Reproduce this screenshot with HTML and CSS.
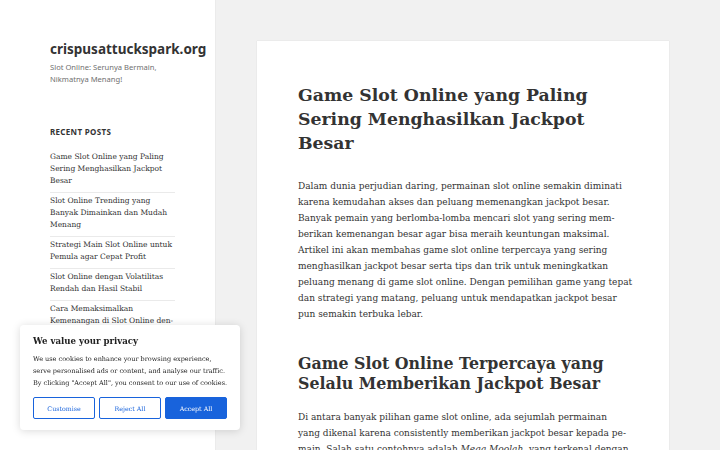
FILE: index.html
```html
<!DOCTYPE html>
<html lang="id">
<head>
    <meta charset="UTF-8">
    <meta name="viewport" content="width=device-width, initial-scale=1.0">
    <title>crispusattuckspark.org</title>
    <link rel="stylesheet" href="styles.css">
</head>
<body>
    <div class="site">
        <aside class="sidebar">
            <header class="site-header">
                <p class="site-title">crispusattuckspark.org</p>
                <p class="site-description">Slot Online: Serunya Bermain, Nikmatnya Menang!</p>
            </header>
            <section class="widget">
                <h2 class="widget-title">Recent Posts</h2>
                <ul class="recent-posts">
                    <li><a href="#">Game Slot Online yang Paling Sering Menghasilkan Jackpot Besar</a></li>
                    <li><a href="#">Slot Online Trending yang Banyak Dimainkan dan Mudah Menang</a></li>
                    <li><a href="#">Strategi Main Slot Online untuk Pemula agar Cepat Profit</a></li>
                    <li><a href="#">Slot Online dengan Volatilitas Rendah dan Hasil Stabil</a></li>
                    <li><a href="#">Cara Memaksimalkan Kemenangan di Slot Online den&shy;gan Modal Kecil</a></li>
                </ul>
            </section>
        </aside>

        <main class="content">
            <article class="post">
                <h1 class="entry-title">Game Slot Online yang Paling Sering Menghasilkan Jackpot Besar</h1>
                <div class="entry-content">
                    <p>Dalam dunia perjudian daring, permainan slot online semakin diminati karena kemudahan akses dan peluang memenangkan jackpot besar. Banyak pemain yang berlomba-lomba mencari slot yang sering mem&shy;berikan kemenangan besar agar bisa meraih keuntungan maksimal. Artikel ini akan membahas game slot online terpercaya yang sering menghasilkan jackpot besar serta tips dan trik untuk meningkatkan peluang menang di game slot online. Dengan pemilihan game yang tepat dan strategi yang matang, peluang untuk mendapatkan jackpot besar pun semakin terbuka lebar.</p>
                    <h2>Game Slot Online Terpercaya yang Selalu Memberikan Jackpot Besar</h2>
                    <p>Di antara banyak pilihan game slot online, ada sejumlah permainan<br>yang dikenal karena consistently memberikan jackpot besar kepada pe&shy;main. Salah satu contohnya adalah <em>Mega Moolah</em>, yang terkenal dengan jackpot progresifnya.</p>
                </div>
            </article>
        </main>
    </div>

    <div class="cookie-banner">
        <p class="cookie-title">We value your privacy</p>
        <p class="cookie-text">We use cookies to enhance your browsing experience,<br>serve personalised ads or content, and analyse our traffic.<br>By clicking "Accept All", you consent to our use of cookies.</p>
        <div class="cookie-buttons">
            <button class="btn btn-outline">Customise</button>
            <button class="btn btn-outline">Reject All</button>
            <button class="btn btn-accept">Accept All</button>
        </div>
    </div>
</body>
</html>
```

FILE: styles.css
```css
/* Reset */
* {
    margin: 0;
    padding: 0;
    box-sizing: border-box;
}

body {
    font-family: "DejaVu Serif", serif;
    background-color: #f1f1f1;
    color: #333;
    height: 450px;
    overflow: hidden;
}

a {
    color: #333;
    text-decoration: none;
}

.site {
    display: flex;
    align-items: flex-start;
    height: 100%;
}

/* Barra lateral */
.sidebar {
    width: 215px;
    height: 100%;
    background-color: #fff;
    box-shadow: 0 0 1px rgba(0, 0, 0, 0.15);
    padding: 39px 40px 0 50px;
    flex-shrink: 0;
}

.site-title {
    font-family: "Noto Sans", sans-serif;
    font-weight: 700;
    font-size: 13.5px;
    line-height: 20px;
    color: #333;
    white-space: nowrap;
}

.site-description {
    font-family: "Noto Sans", sans-serif;
    font-size: 7.6px;
    line-height: 12px;
    color: #707070;
    margin-top: 2px;
}

.widget {
    margin-top: 41px;
}

.widget-title {
    font-family: "Noto Sans", sans-serif;
    font-size: 8px;
    font-weight: 700;
    letter-spacing: 0.04em;
    text-transform: uppercase;
    line-height: 12px;
    margin-bottom: 13px;
}

.recent-posts {
    list-style: none;
    width: 125px;
}

.recent-posts li {
    font-size: 7.5px;
    line-height: 12px;
    border-top: 1px solid #eaeaea;
    padding: 2px 0 5px 0;
}

.recent-posts li:first-child {
    border-top: none;
    padding-top: 0;
}

/* Conteúdo */
.content {
    margin: 41px 0 0 42px;
    width: 412px;
}

.post {
    background-color: #fff;
    box-shadow: 0 0 1px rgba(0, 0, 0, 0.15);
    padding: 42px 36px 40px 41px;
}

.entry-title {
    font-size: 17.3px;
    line-height: 24px;
    font-weight: 700;
    margin-bottom: 23px;
    padding-right: 5px;
}

.entry-content p {
    font-size: 9px;
    line-height: 16px;
    margin-bottom: 32px;
}

.entry-content h2 {
    font-size: 15.8px;
    line-height: 20px;
    font-weight: 700;
    margin-bottom: 15px;
    padding-right: 5px;
}

/* Banner de cookies */
.cookie-banner {
    position: fixed;
    left: 20px;
    top: 325px;
    width: 220px;
    height: 105px;
    background-color: #fff;
    border-radius: 4px;
    box-shadow: 0 1px 8px rgba(0, 0, 0, 0.15);
    padding: 9px 11px 0 13px;
    color: #212121;
}

.cookie-title {
    font-size: 8.6px;
    font-weight: 700;
    line-height: 14px;
    margin-bottom: 5px;
}

.cookie-text {
    font-size: 6.5px;
    line-height: 12px;
    margin-bottom: 8px;
    white-space: nowrap;
}

.cookie-buttons {
    display: flex;
    gap: 4px;
    padding-right: 2px;
}

.btn {
    font-family: "DejaVu Serif", serif;
    font-size: 6.3px;
    height: 22px;
    flex: 1;
    border: 1.5px solid #1863dc;
    border-radius: 2px;
    background-color: #fff;
    color: #1863dc;
}

.btn-accept {
    background-color: #1863dc;
    color: #fff;
}
```
